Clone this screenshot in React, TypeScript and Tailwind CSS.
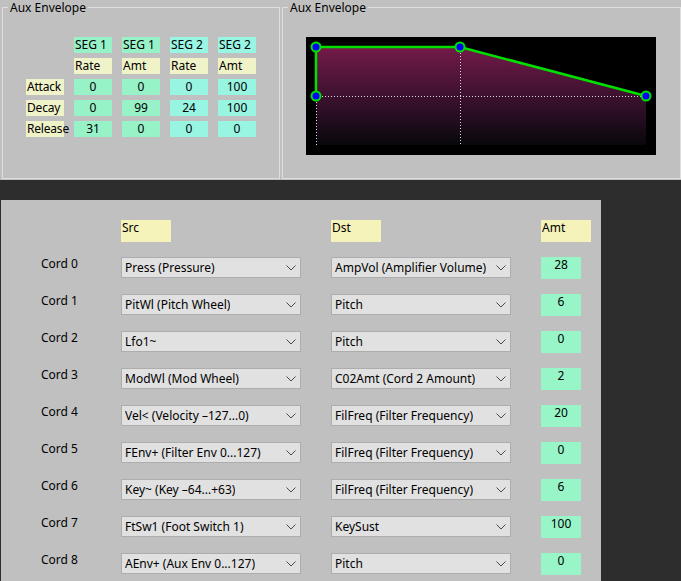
import React from 'react';

const font = { fontFamily: '"Noto Sans", "Liberation Sans", sans-serif' };

const segHeads = [
  { top: 'SEG 1', sub: 'Rate', seg: 1 },
  { top: 'SEG 1', sub: 'Amt', seg: 1 },
  { top: 'SEG 2', sub: 'Rate', seg: 2 },
  { top: 'SEG 2', sub: 'Amt', seg: 2 },
];

const envRows = [
  { label: 'Attack', values: [0, 0, 0, 100] },
  { label: 'Decay', values: [0, 99, 24, 100] },
  { label: 'Release', values: [31, 0, 0, 0] },
];

const cords = [
  { src: 'Press (Pressure)', dst: 'AmpVol (Amplifier Volume)', amt: 28 },
  { src: 'PitWl (Pitch Wheel)', dst: 'Pitch', amt: 6 },
  { src: 'Lfo1~', dst: 'Pitch', amt: 0 },
  { src: 'ModWl (Mod Wheel)', dst: 'C02Amt (Cord 2 Amount)', amt: 2 },
  { src: 'Vel< (Velocity \u2013127...0)', dst: 'FilFreq (Filter Frequency)', amt: 20 },
  { src: 'FEnv+ (Filter Env 0...127)', dst: 'FilFreq (Filter Frequency)', amt: 0 },
  { src: 'Key~ (Key \u201364...+63)', dst: 'FilFreq (Filter Frequency)', amt: 6 },
  { src: 'FtSw1 (Foot Switch 1)', dst: 'KeySust', amt: 100 },
  { src: 'AEnv+ (Aux Env 0...127)', dst: 'Pitch', amt: 0 },
];

const GroupBox: React.FC<{ title: string; className: string; children: React.ReactNode }> = ({
  title,
  className,
  children,
}) => (
  <div className={`relative mt-[7px] h-[172px] border border-[#dedede] ${className}`}>
    <span className="absolute -top-[7px] left-[5px] bg-[#c0c0c0] px-[2px] text-[12px] leading-[14px] text-black">
      {title}
    </span>
    {children}
  </div>
);

const Dropdown: React.FC<{ value: string }> = ({ value }) => (
  <div className="flex h-[21px] w-[180px] items-center justify-between border border-[#adadad] bg-[#e1e1e1] pl-[3px] pr-[4px]">
    <span className="truncate text-[12px] leading-[16px] text-black">{value}</span>
    <svg width="10" height="6" viewBox="0 0 10 6" className="shrink-0">
      <path d="M0.5 0.5 L5 5 L9.5 0.5" fill="none" stroke="#4a4a4a" strokeWidth="1" />
    </svg>
  </div>
);

const EnvelopeGraph: React.FC = () => (
  <svg width="350" height="118" viewBox="0 0 350 118" className="block bg-black">
    <defs>
      <linearGradient id="envFill" x1="0" y1="10" x2="0" y2="108" gradientUnits="userSpaceOnUse">
        <stop offset="0" stopColor="#731a48" />
        <stop offset="0.5" stopColor="#3d1130" />
        <stop offset="1" stopColor="#08080c" />
      </linearGradient>
    </defs>
    <polygon points="10,10 154,10 340,59 340,108 10,108" fill="url(#envFill)" />
    <g stroke="#d8d8d8" strokeWidth="1" strokeDasharray="1 2" fill="none">
      <line x1="10" y1="59.5" x2="340" y2="59.5" />
      <line x1="10.5" y1="59" x2="10.5" y2="108" />
      <line x1="154.5" y1="10" x2="154.5" y2="108" />
    </g>
    <polyline points="10,59 10,10 154,10 340,59" fill="none" stroke="#00e000" strokeWidth="2.5" />
    {[
      [10, 10],
      [154, 10],
      [340, 59],
      [10, 59],
    ].map(([cx, cy], i) => (
      <circle key={i} cx={cx} cy={cy} r="4.5" fill="#0000ff" stroke="#00e000" strokeWidth="2" />
    ))}
  </svg>
);

const App: React.FC = () => {
  return (
    <div className="flex h-[581px] w-[681px] flex-col overflow-hidden bg-[#2d2d2d] text-black" style={font}>
      {/* top: envelope groups */}
      <div className="flex h-[180px] shrink-0 gap-[2px] bg-[#c0c0c0] pl-[2px]">
        <GroupBox title="Aux Envelope" className="w-[278px]">
          <div className="grid grid-cols-[38px_38px_38px_38px_38px] gap-x-[10px] gap-y-[5px] pl-[23px] pt-[29px] text-[12px] leading-[16px]">
            <div />
            {segHeads.map((h, i) => (
              <div key={`t${i}`} className={`h-[16px] pl-[1px] ${h.seg === 1 ? 'bg-[#98f2c8]' : 'bg-[#98f5e2]'}`}>
                {h.top}
              </div>
            ))}
            <div />
            {segHeads.map((h, i) => (
              <div key={`s${i}`} className="h-[16px] bg-[#f0f2c8] pl-[1px]">
                {h.sub}
              </div>
            ))}
            {envRows.map((row) => (
              <React.Fragment key={row.label}>
                <div className="h-[16px] bg-[#f0f2c8] pl-[1px] tracking-[-0.2px] whitespace-nowrap">{row.label}</div>
                {row.values.map((v, i) => (
                  <div
                    key={i}
                    className={`h-[16px] text-center ${i < 2 ? 'bg-[#98f2c8]' : 'bg-[#98f5e2]'}`}
                  >
                    {v}
                  </div>
                ))}
              </React.Fragment>
            ))}
          </div>
        </GroupBox>
        <GroupBox title="Aux Envelope" className="w-[399px]">
          <div className="pl-[23px] pt-[29px]">
            <EnvelopeGraph />
          </div>
        </GroupBox>
      </div>

      {/* modulation cords */}
      <div className="ml-[1px] mt-[20px] flex w-[600px] flex-1 flex-col bg-[#c0c0c0] pl-[40px] pt-[20px] text-[12px] leading-[16px]">
        <div className="flex h-[22px]">
          <div className="w-[80px]" />
          <div className="h-[22px] w-[50px] bg-[#f5f2ba] pl-[1px]">Src</div>
          <div className="ml-[160px] h-[22px] w-[50px] bg-[#f5f2ba] pl-[1px]">Dst</div>
          <div className="ml-[160px] h-[22px] w-[50px] bg-[#f5f2ba] pl-[1px]">Amt</div>
        </div>
        <div className="mt-[15px] flex flex-col gap-[16px]">
          {cords.map((c, i) => (
            <div key={i} className="flex h-[21px] items-start">
              <div className="-mt-[1px] w-[80px]">Cord {i}</div>
              <Dropdown value={c.src} />
              <div className="ml-[30px]">
                <Dropdown value={c.dst} />
              </div>
              <div className="ml-[30px] h-[22px] w-[40px] bg-[#98f5c8] text-center">{c.amt}</div>
            </div>
          ))}
        </div>
      </div>
    </div>
  );
};

export default App;
